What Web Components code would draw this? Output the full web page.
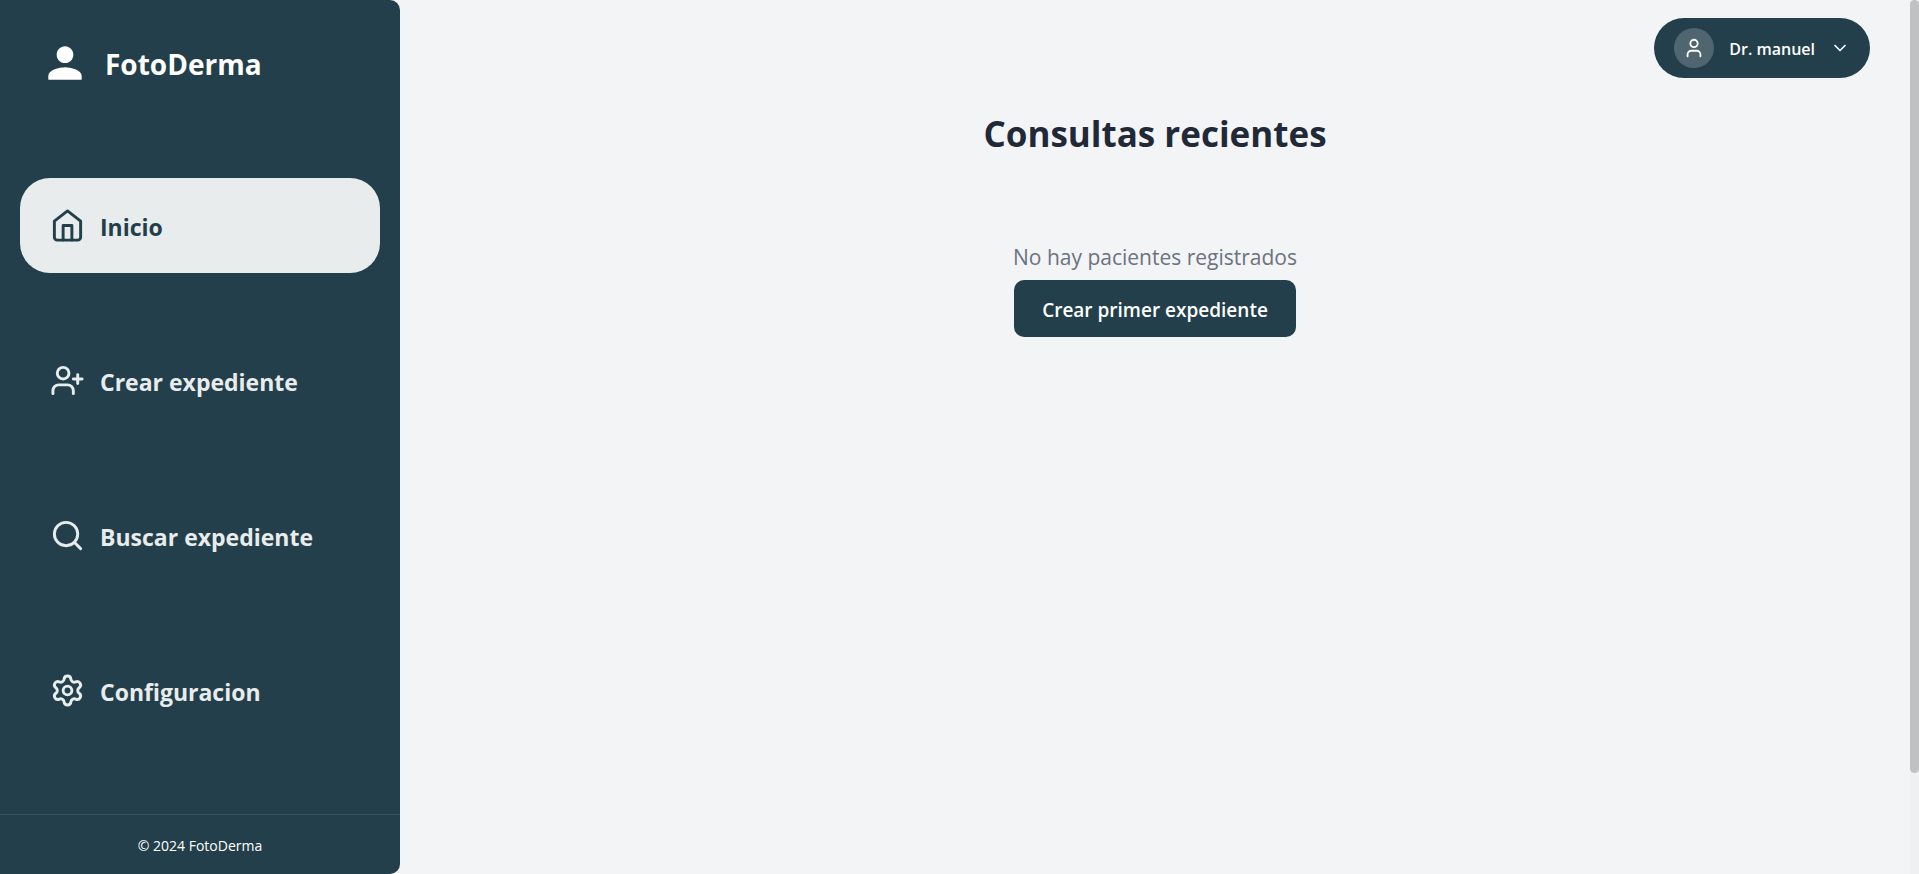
<!DOCTYPE html>
<html lang="es">
<head>
<meta charset="utf-8">
<meta name="viewport" content="width=device-width, initial-scale=1">
<title>FotoDerma</title>
<style>
  :root {
    --brand: #233f4b;
    --brand-soft: #e8ecec;
    --page: #f3f4f6;
    --ink: #1f2937;
    --muted: #6b7280;
  }
  body {
    margin: 0;
    background: var(--page);
    font-family: "Segoe UI", "Open Sans", "Noto Sans", sans-serif;
  }
</style>
</head>
<body>
<fd-app>
  <fd-sidebar slot="sidebar">
    <fd-nav-item icon="home" href="#inicio" active>Inicio</fd-nav-item>
    <fd-nav-item icon="user-plus" href="#crear">Crear expediente</fd-nav-item>
    <fd-nav-item icon="search" href="#buscar">Buscar expediente</fd-nav-item>
    <fd-nav-item icon="settings" href="#configuracion">Configuracion</fd-nav-item>
    <span slot="footer">© 2024 FotoDerma</span>
  </fd-sidebar>
  <fd-user-menu slot="top">Dr. manuel</fd-user-menu>
  <fd-recent>
    <span slot="title">Consultas recientes</span>
    <span slot="empty">No hay pacientes registrados</span>
    <span slot="action">Crear primer expediente</span>
  </fd-recent>
</fd-app>

<script>
const ICONS = {
  person: '<path fill="currentColor" stroke="none" d="M12 12c2.21 0 4-1.79 4-4s-1.79-4-4-4-4 1.790-4 4 1.790 4 4 4zm0 2c-2.670 0-8 1.340-8 4v2h16v-2c0-2.660-5.330-4-8-4z"/>',
  home: '<path d="m3 9 9-7 9 7v11a2 2 0 0 1-2 2H5a2 2 0 0 1-2-2z"/><path d="M9 22V12h6v10"/>',
  'user-plus': '<path d="M16 21v-2a4 4 0 0 0-4-4H6a4 4 0 0 0-4 4v2"/><circle cx="9" cy="7" r="4"/><path d="M19 8v6M22 11h-6"/>',
  search: '<circle cx="11" cy="11" r="8"/><path d="m21 21-4.340-4.340"/>',
  settings: '<path d="M9.671 4.136a2.34 2.34 0 0 1 4.659 0 2.34 2.34 0 0 0 3.319 1.915 2.34 2.34 0 0 1 2.33 4.033 2.34 2.34 0 0 0 0 3.831 2.34 2.34 0 0 1-2.33 4.033 2.34 2.34 0 0 0-3.319 1.915 2.34 2.34 0 0 1-4.659 0 2.34 2.34 0 0 0-3.32-1.915 2.34 2.34 0 0 1-2.33-4.033 2.34 2.34 0 0 0 0-3.831A2.34 2.34 0 0 1 6.35 6.051a2.34 2.34 0 0 0 3.319-1.915"/><circle cx="12" cy="12" r="3"/>',
  user: '<path d="M19 21v-2a4 4 0 0 0-4-4H9a4 4 0 0 0-4 4v2"/><circle cx="12" cy="7" r="4"/>',
  chevron: '<path d="m6 9 6 6 6-6"/>'
};

function define(name, render) {
  customElements.define(name, class extends HTMLElement {
    constructor() {
      super();
      this.attachShadow({ mode: 'open' });
    }
    connectedCallback() {
      this.shadowRoot.innerHTML = render(this);
    }
  });
}

define('fd-icon', el => `
  <style>
    :host { display: block; flex: none; width: var(--size, 24px); height: var(--size, 24px); }
    svg { display: block; width: 100%; height: 100%; }
  </style>
  <svg viewBox="0 0 24 24" fill="none" stroke="currentColor" stroke-width="2"
       stroke-linecap="round" stroke-linejoin="round" aria-hidden="true">${ICONS[el.getAttribute('name')]}</svg>`);

define('fd-nav-item', el => `
  <style>
    :host { display: block; }
    a {
      display: flex; align-items: center; gap: 15px;
      padding: 30px; border-radius: 30px;
      color: var(--brand-soft); text-decoration: none;
      font-size: 23px; line-height: 32px; font-weight: 700;
    }
    :host([active]) a { background: var(--brand-soft); color: var(--brand); }
    fd-icon { --size: 35px; }
    .label { padding-top: 2px; }
  </style>
  <a href="${el.getAttribute('href')}"${el.hasAttribute('active') ? ' aria-current="page"' : ''}>
    <fd-icon name="${el.getAttribute('icon')}"></fd-icon><span class="label"><slot></slot></span>
  </a>`);

define('fd-sidebar', () => `
  <style>
    :host {
      display: flex; flex-direction: column; box-sizing: border-box;
      background: var(--brand); color: #fff; border-radius: 0 10px 10px 0;
    }
    header { display: flex; align-items: center; gap: 15px; padding: 38px 40px 90px; }
    header fd-icon { --size: 50px; }
    .name { padding-top: 2px; font-size: 28px; line-height: 40px; font-weight: 700; }
    nav { flex: 1; display: flex; flex-direction: column; gap: 60px; padding: 0 20px; }
    footer {
      border-top: 1px solid rgba(255, 255, 255, .1);
      padding: 21px 20px 18px; text-align: center; font-size: 14px; line-height: 20px;
    }
  </style>
  <header><fd-icon name="person"></fd-icon><span class="name">FotoDerma</span></header>
  <nav><slot></slot></nav>
  <footer><slot name="footer"></slot></footer>`);

define('fd-user-menu', () => `
  <style>
    :host { display: block; }
    button {
      display: flex; align-items: center; gap: 15px;
      padding: 10px 20px; border: 0; border-radius: 30px;
      background: var(--brand); color: #fff;
      font: 600 16px/24px "Segoe UI", "Open Sans", "Noto Sans", sans-serif; cursor: pointer;
    }
    .avatar {
      display: grid; place-items: center; width: 40px; height: 40px;
      border-radius: 50%; background: rgba(255, 255, 255, .2); --size: 22px;
    }
    .label { padding-top: 2px; }
    .chevron { --size: 20px; }
  </style>
  <button type="button" aria-haspopup="menu">
    <span class="avatar"><fd-icon name="user"></fd-icon></span>
    <span class="label"><slot></slot></span>
    <fd-icon class="chevron" name="chevron"></fd-icon>
  </button>`);

define('fd-recent', () => `
  <style>
    :host { display: flex; flex-direction: column; align-items: center; padding: 0 40px; }
    h1 { margin: 30px 0 80px; color: var(--ink); font-size: 35px; line-height: 52px; font-weight: 700; }
    p { margin: 0 0 6px; color: var(--muted); font-size: 21px; line-height: 34px; }
    button {
      padding: 17px 28px 13px; border: 0; border-radius: 10px;
      background: var(--brand); color: #fff;
      font: 600 19px/27px "Segoe UI", "Open Sans", "Noto Sans", sans-serif; cursor: pointer;
    }
  </style>
  <h1><slot name="title"></slot></h1>
  <p><slot name="empty"></slot></p>
  <button type="button"><slot name="action"></slot></button>`);

define('fd-scrollbar', () => `
  <style>
    :host { display: block; background: #f0f0f0; }
    div { height: 88.5%; border-radius: 5px; background: #c1c1c1; }
  </style>
  <div></div>`);

define('fd-app', () => `
  <style>
    :host { display: grid; grid-template-columns: 400px minmax(0, 1fr) 9px; min-height: 100vh; }
    .top { display: flex; justify-content: flex-end; padding: 18px 40px 0; }
  </style>
  <slot name="sidebar"></slot>
  <main>
    <div class="top"><slot name="top"></slot></div>
    <slot></slot>
  </main>
  <fd-scrollbar aria-hidden="true"></fd-scrollbar>`);
</script>
</body>
</html>
